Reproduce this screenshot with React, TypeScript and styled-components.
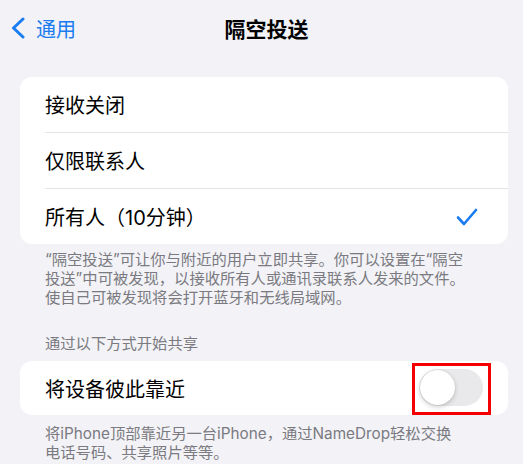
import React from 'react';
import styled, { createGlobalStyle } from 'styled-components';

const GlobalStyle = createGlobalStyle`
  html, body {
    margin: 0;
    padding: 0;
    background: #f2f2f7;
  }
  body {
    font-family: Inter, "Noto Sans CJK SC", sans-serif;
    color: #000;
  }
`;

const options = ['接收关闭', '仅限联系人', '所有人（10分钟）'];

const App = () => {
  return (
    <Page>
      <GlobalStyle />
      <NavBar>
        <BackButton>
          <svg width="14" height="22" viewBox="0 0 14 22">
            <path d="M12 2 L2.5 11 L12 20" fill="none" stroke="#1a7cf0" strokeWidth="3" strokeLinecap="round" strokeLinejoin="round" />
          </svg>
          <BackLabel>通用</BackLabel>
        </BackButton>
        <Title>隔空投送</Title>
      </NavBar>

      <Card>
        {options.map((label, i) => (
          <OptionRow key={label} last={i === options.length - 1}>
            <RowLabel>{label}</RowLabel>
            {i === options.length - 1 && (
              <svg width="22" height="18" viewBox="0 0 22 18">
                <path d="M2 9.5 L8 16 L20 2" fill="none" stroke="#1a7cf0" strokeWidth="2.6" strokeLinecap="round" strokeLinejoin="round" />
              </svg>
            )}
          </OptionRow>
        ))}
      </Card>
      <Footnote top={6}>
        “隔空投送”可让你与附近的用户立即共享。你可以设置在“隔空<br />
        投送”中可被发现，以接收所有人或通讯录联系人发来的文件。<br />
        使自己可被发现将会打开蓝牙和无线局域网。
      </Footnote>

      <SectionHeader>通过以下方式开始共享</SectionHeader>
      <Card>
        <ToggleRow>
          <RowLabel>将设备彼此靠近</RowLabel>
          <Highlight>
            <Track>
              <Knob />
            </Track>
          </Highlight>
        </ToggleRow>
      </Card>
      <Footnote top={9}>
        将iPhone顶部靠近另一台iPhone，通过NameDrop轻松交换<br />
        电话号码、共享照片等等。
      </Footnote>
    </Page>
  );
};

const Page = styled.div`
  position: relative;
  width: 523px;
  height: 464px;
  overflow: hidden;
  background: #f2f2f7;
  padding: 0 15px 0 20px;
  box-sizing: border-box;
`;

const NavBar = styled.div`
  position: relative;
  height: 56px;
  display: flex;
  align-items: center;
  justify-content: center;
`;

const BackButton = styled.div`
  position: absolute;
  left: -9px;
  top: 0;
  height: 56px;
  display: flex;
  align-items: center;
  gap: 11px;
  color: #1a7cf0;
`;

const BackLabel = styled.span`
  font-size: 20px;
`;

const Title = styled.div`
  font-size: 21px;
  font-weight: 600;
  margin-left: 5px;
`;

const Card = styled.div`
  margin-top: 21px;
  background: #fff;
  border-radius: 12px;
  overflow: hidden;
`;

const OptionRow = styled.div<{ last: boolean }>`
  position: relative;
  height: 55px;
  display: flex;
  align-items: center;
  justify-content: space-between;
  padding: 0 30px 0 25px;
  margin-bottom: ${p => (p.last ? 0 : '1px')};
  &::after {
    content: '';
    display: ${p => (p.last ? 'none' : 'block')};
    position: absolute;
    left: 25px;
    right: 0;
    bottom: -1px;
    height: 1px;
    background: #e2e2e6;
  }
`;

const RowLabel = styled.span`
  font-size: 20px;
`;

const Footnote = styled.div<{ top: number }>`
  padding: ${p => p.top}px 0 0 25px;
  font-size: 15.3px;
  line-height: 19px;
  color: #7a7a80;
  white-space: nowrap;
`;

const SectionHeader = styled.div`
  margin-top: 28px;
  padding-left: 25px;
  font-size: 15.3px;
  line-height: 18px;
  color: #7a7a80;
  & + ${Card} {
    margin-top: 8px;
  }
`;

const ToggleRow = styled.div`
  height: 54px;
  display: flex;
  align-items: center;
  justify-content: space-between;
  padding: 0 17px 0 25px;
`;

const Highlight = styled.div`
  border: 3px solid #f50000;
  padding: 3px 5px 6px 4px;
  margin-top: 2px;
`;

const Track = styled.div`
  position: relative;
  width: 64px;
  height: 37px;
  border-radius: 19px;
  background: #e9e9eb;
`;

const Knob = styled.div`
  position: absolute;
  left: 1px;
  top: 1px;
  width: 35px;
  height: 35px;
  border-radius: 50%;
  background: #fff;
  box-shadow: 0 2px 5px rgba(0, 0, 0, 0.18), 0 0 1px rgba(0, 0, 0, 0.2);
`;

export default App;
